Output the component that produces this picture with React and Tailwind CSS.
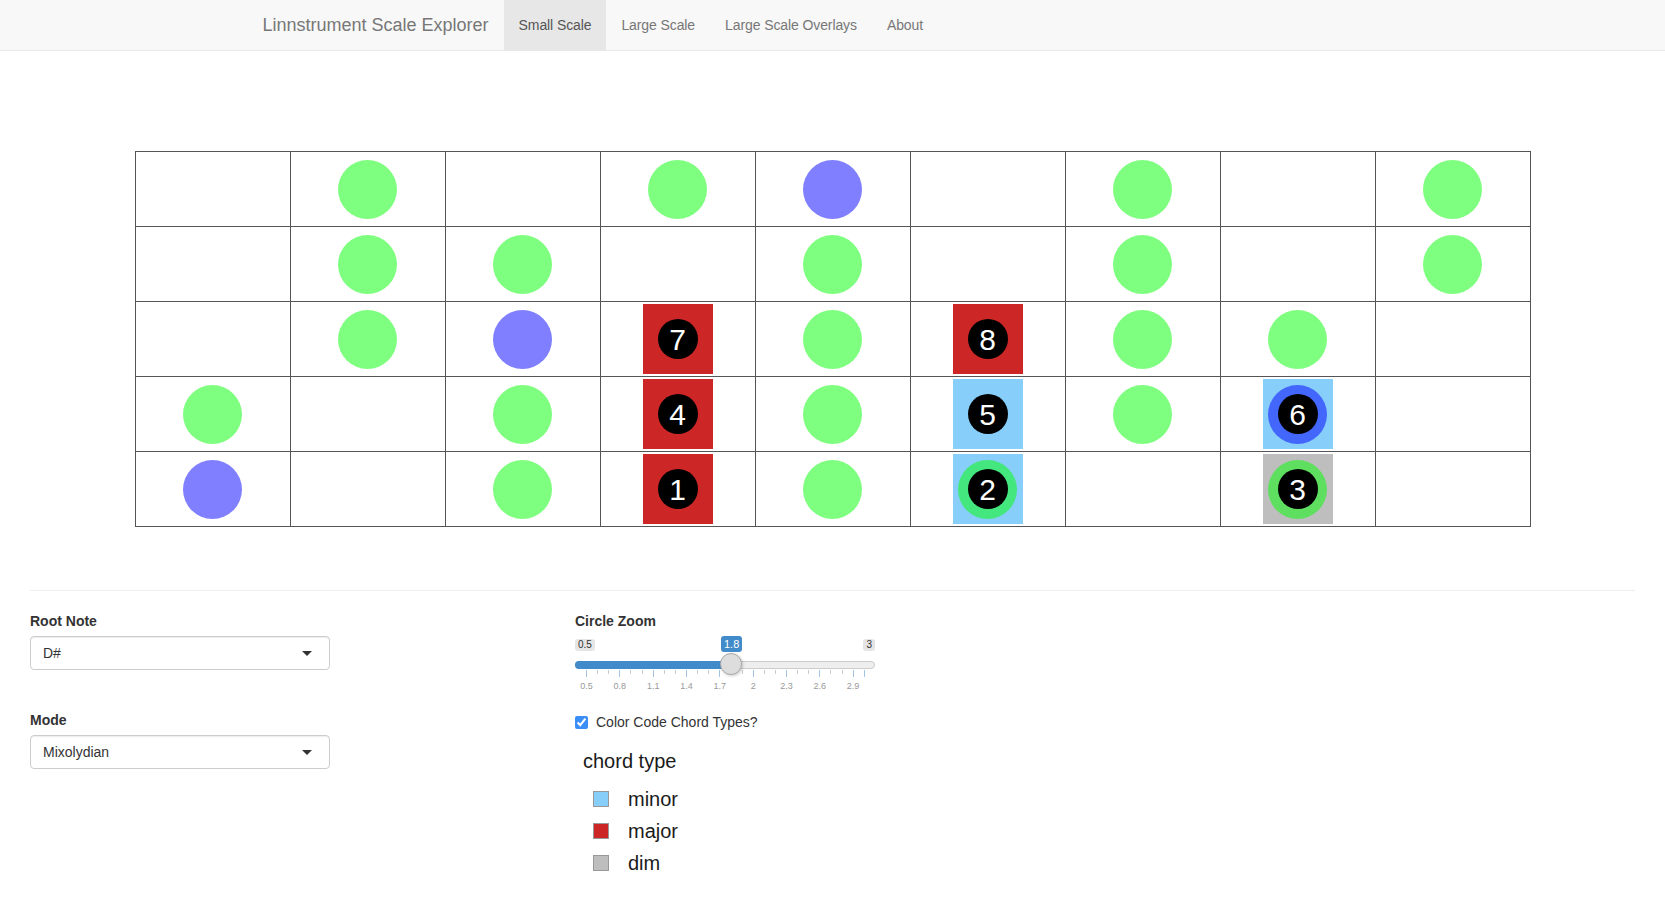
import React from 'react';

const sqCls = {
    r: 'bg-[#cd2626]',
    m: 'bg-[#87cefa]',
    d: 'bg-[#bebebe]',
};

const dotCls = {
    g: 'bg-[#00ff00]/50',
    b: 'bg-[#0000ff]/50',
};

// 5 rows x 9 columns, top row first
const rows = [
    [0, 'g', 0, 'g', 'b', 0, 'g', 0, 'g'],
    [0, 'g', 'g', 0, 'g', 0, 'g', 0, 'g'],
    [0, 'g', 'b', { sq: 'r', n: 7 }, 'g', { sq: 'r', n: 8 }, 'g', 'g', 0],
    ['g', 0, 'g', { sq: 'r', n: 4 }, 'g', { sq: 'm', n: 5 }, 'g', { sq: 'm', c: 'b', n: 6 }, 0],
    ['b', 0, 'g', { sq: 'r', n: 1 }, 'g', { sq: 'm', c: 'g', n: 2 }, 0, { sq: 'd', c: 'g', n: 3 }, 0],
];

const NumberDot = ({ n }) => (
    <div className="w-[40px] h-[40px] rounded-full bg-black flex items-center justify-center">
        <span className="text-white text-[30px] leading-none translate-y-[1px]">{n}</span>
    </div>
);

const Cell = ({ v }) => {
    if (!v) return <div className="bg-white" />;
    if (typeof v === 'string') {
        return (
            <div className="bg-white flex items-center justify-center">
                <div className={`w-[59px] h-[59px] rounded-full ${dotCls[v]}`} />
            </div>
        );
    }
    return (
        <div className="bg-white flex items-center justify-center">
            <div className={`w-[70px] h-[70px] flex items-center justify-center ${sqCls[v.sq]}`}>
                {v.c ? (
                    <div className={`w-[59px] h-[59px] rounded-full flex items-center justify-center ${dotCls[v.c]}`}>
                        <NumberDot n={v.n} />
                    </div>
                ) : (
                    <NumberDot n={v.n} />
                )}
            </div>
        </div>
    );
};

const NavBar = () => (
    <div className="h-[51px] bg-[#f8f8f8] border-b border-[#e7e7e7]">
        <div className="w-[1170px] mx-auto px-[15px] flex h-[50px]">
            <a className="-ml-[15px] px-[15px] py-[15px] text-[18px] leading-[20px] text-[#777]">Linnstrument Scale Explorer</a>
            <ul className="flex text-[14px] leading-[20px] text-[#777] tracking-[-0.1px]">
                <li className="px-[15px] py-[15px] bg-[#e7e7e7] text-[#555]">Small Scale</li>
                <li className="px-[15px] py-[15px]">Large Scale</li>
                <li className="px-[15px] py-[15px]">Large Scale Overlays</li>
                <li className="px-[15px] py-[15px]">About</li>
            </ul>
        </div>
    </div>
);

const SelectBox = ({ value }) => (
    <div className="relative w-[300px] h-[34px] border border-[#ccc] rounded-[4px] bg-white shadow-[inset_0_1px_1px_rgba(0,0,0,0.075)] flex items-center pl-[12px] text-[14px] text-[#333]">
        {value}
        <span className="absolute right-[17px] top-[14px] w-0 h-0 border-l-[5px] border-r-[5px] border-t-[5px] border-l-transparent border-r-transparent border-t-[#333]" />
    </div>
);

const Slider = () => {
    const ticks = Array.from({ length: 26 }, (_, i) => i);
    const labels = ['0.5', '0.8', '1.1', '1.4', '1.7', '2', '2.3', '2.6', '2.9'];
    return (
        <div className="relative w-[300px] h-[55px]">
            <span className="absolute left-0 top-[3px] h-[12px] px-[3px] rounded-[3px] bg-black/10 text-[10px] leading-[12px] text-[#333]">0.5</span>
            <span className="absolute right-0 top-[3px] h-[12px] px-[3px] rounded-[3px] bg-black/10 text-[10px] leading-[12px] text-[#333]">3</span>
            <span className="absolute left-[146px] top-0 h-[16px] px-[3px] rounded-[3px] bg-[#428bca] text-[11px] leading-[16px] text-white">1.8</span>
            <div className="absolute left-0 right-0 top-[25px] h-[8px] rounded-full border border-[#ccc] bg-[#eee]" />
            <div className="absolute left-0 top-[25px] w-[156px] h-[8px] rounded-l-full bg-[#428bca]" />
            {ticks.map((i) => (
                <div
                    key={i}
                    className={`absolute top-[34px] w-px ${i % 3 === 0 || i === 25 ? 'h-[7px] bg-[#428bca]/50' : 'h-[4px] bg-[#ccc]'}`}
                    style={{ left: 11 + i * 11.11 }}
                />
            ))}
            {labels.map((l, i) => (
                <span
                    key={l}
                    className="absolute top-[46px] -translate-x-1/2 text-[9px] leading-[9px] text-[#999]"
                    style={{ left: 11.5 + i * 33.33 }}
                >
                    {l}
                </span>
            ))}
            <div className="absolute left-[145px] top-[17px] w-[22px] h-[22px] rounded-full border border-[#aaa] bg-[#ddd] shadow-[1px_1px_3px_rgba(0,0,0,0.2)]" />
        </div>
    );
};

const legend = [
    { label: 'minor', cls: 'bg-[#87cefa]' },
    { label: 'major', cls: 'bg-[#cd2626]' },
    { label: 'dim', cls: 'bg-[#bebebe]' },
];

const App = () => {
    return (
        <div className="bg-white font-['Liberation_Sans',Arial,sans-serif] text-[#333]">
            <NavBar />

            <div className="pt-[100px]">
                <div className="mx-auto w-[1396px] grid grid-cols-[repeat(9,154px)] grid-rows-[repeat(5,74px)] gap-px p-px bg-[#555]">
                    {rows.map((row, r) => row.map((v, c) => <Cell key={`${r}-${c}`} v={v} />))}
                </div>
            </div>

            <hr className="mt-[63px] mx-[30px] border-0 border-t border-[#eee]" />

            <div className="flex pl-[30px] pt-[20px] pb-[20px]">
                <div className="w-[545px]">
                    <div className="text-[14px] leading-[20px] font-bold mb-[5px]">Root Note</div>
                    <SelectBox value="D#" />
                    <div className="text-[14px] leading-[20px] font-bold mb-[5px] mt-[40px]">Mode</div>
                    <SelectBox value="Mixolydian" />
                </div>

                <div className="w-[545px]">
                    <div className="text-[14px] leading-[20px] font-bold mb-[5px]">Circle Zoom</div>
                    <Slider />
                    <label className="flex items-center h-[20px] mt-[21px] text-[14px]">
                        <input type="checkbox" checked readOnly className="w-[13px] h-[13px] m-0 accent-[#3b8ef5]" />
                        <span className="ml-[8px]">Color Code Chord Types?</span>
                    </label>
                    <div className="mt-[17px] pl-[8px] text-[20px] leading-[24px] text-[#1a1a1a]">chord type</div>
                    <div className="mt-[10px] pl-[18px]">
                        {legend.map((l) => (
                            <div key={l.label} className="flex items-center h-[32px]">
                                <div className={`w-[16px] h-[16px] border border-[#999] ${l.cls}`} />
                                <span className="ml-[19px] text-[20px] leading-[24px] text-[#1a1a1a]">{l.label}</span>
                            </div>
                        ))}
                    </div>
                </div>
            </div>
        </div>
    );
};

export default App;
